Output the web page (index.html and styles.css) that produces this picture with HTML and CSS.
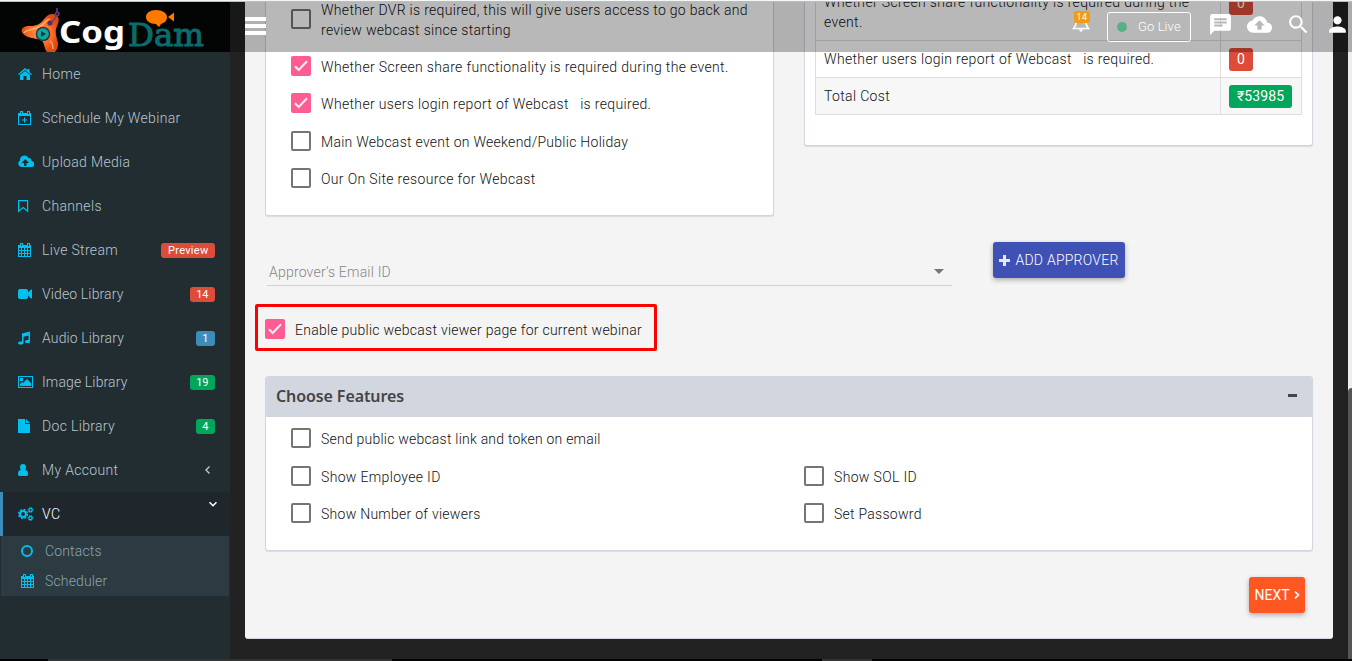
FILE: index.html
```html
<!DOCTYPE html>
<html lang="en">
<head>
<meta charset="utf-8">
<title>CogDam</title>
<link rel="stylesheet" href="styles.css">
</head>
<body>
<svg class="defs" width="0" height="0">
  <symbol id="cal" viewBox="0 0 14 14"><path fill-rule="evenodd" d="M0 2h2V0h3v2h4V0h3v2h1v12H0zM1 5v2h2V5zm3 0v2h2V5zm3 0v2h2V5zm3 0v2h2V5zM1 8v2h2V8zm3 0v2h2V8zm3 0v2h2V8zm3 0v2h2V8zM1 11v2h2v-2zm3 0v2h2v-2zm3 0v2h2v-2zm3 0v2h2v-2zM3 1v2h1V1zm7 0v2h1V1z"/></symbol>
  <symbol id="check" viewBox="0 0 20 20"><path d="M4 10.200l3.700 3.800L16 5.300" fill="none" stroke="#fff" stroke-opacity=".9" stroke-width="2"/></symbol>
</svg>
<div class="topline"></div>
<div class="app">
  <aside class="sidebar">
    <div class="logo">
      <svg width="230" height="50" viewBox="0 2 230 50">
        <defs><radialGradient id="org"><stop offset="0" stop-color="#ff9a58"/><stop offset=".65" stop-color="#ff6b25"/><stop offset="1" stop-color="#e04a10"/></radialGradient></defs>
        <path d="M37 25c5-2 6-5 9-8 3-4 10-4 12 0 2 5-1 8-2 12-1 5 1 9 2 14 0 4-1 7-3 9h-8c-3-3-2-8-5-11-4-3-9-2-14-4-9-4-8-10 0-11 3 0 6 0 9-1z" fill="url(#org)"/>
        <path d="M24 33c1-3 8-3 15-6 5-2 6-7 11-8M50 41c3 2 3 5 3 8" stroke="#ffc08c" stroke-width="1.500" fill="none" opacity=".75"/>
        <circle cx="43" cy="34" r="7.300" fill="#243b42"/><circle cx="43" cy="34" r="5.800" fill="#15a6a1"/><path d="M41 31v6l5-3z" fill="#17363b"/>
        <path d="M51 23c2-3 4-4 6-8M57 8v4M55 15c1-4 4-3 4-1s-4 2-4 1" fill="none" stroke="#654078" stroke-width="1.600"/><circle cx="50" cy="23" r="2.600" fill="#58315e"/>
        <text class="cog" x="59" y="43" textLength="66" lengthAdjust="spacingAndGlyphs">Cog</text>
        <text class="dam" x="128" y="45.500" textLength="76" lengthAdjust="spacingAndGlyphs">Dam</text>
        <path d="M146 17c0-4 4-7 10-7s11 3 11 7-3 6-6 7l-2 3-3-3c-6 0-10-3-10-7zM168 17l6-4.500v9z" fill="#ff7800"/>
      </svg>
    </div>
    <nav class="menu">
      <a class="item"><svg class="ico" viewBox="0 0 14 14"><path d="M7 1l2.500 2.200V2h2v3L14 7.300l-.8.800L7 3 .8 8.100 0 7.300zM2 8l5-4 5 4v5H8.500V9h-3v4H2z"/></svg><span>Home</span></a>
      <a class="item"><svg class="ico" viewBox="0 0 14 14"><path fill-rule="evenodd" d="M0 2h2V0h3v2h4V0h3v2h1v12H0zM1 5v8h11V5zM6 6.500h1V8.500h2v1H7v2H6v-2H4v-1h2zM3 1v2h1V1zm7 0v2h1V1z"/></svg><span>Schedule My Webinar</span></a>
      <a class="item"><svg class="ico wide" viewBox="0 0 16 14"><path fill-rule="evenodd" d="M3.500 12A3.500 3.500 0 0 1 2 5.500 4.500 4.500 0 0 1 10.500 3c2 0 3 1 3 3A3 3 0 0 1 13 12zM6 11h2.500V8H11L7.300 4 3.500 8H6z"/></svg><span>Upload Media</span></a>
      <a class="item"><svg class="ico" viewBox="0 0 14 14"><path d="M.6 1.600h9v10.600L5.100 8.600.6 12.200z" fill="none" stroke="#00c0ef" stroke-width="1.200"/></svg><span>Channels</span></a>
      <a class="item"><svg class="ico"><use href="#cal"/></svg><span>Live Stream</span><b class="badge red preview">Preview</b></a>
      <a class="item tight"><svg class="ico" viewBox="0 0 14 14"><path d="M2 2h6c1.200 0 2 .8 2 2v1.500L13 2.500h1v9h-1l-3-3V10c0 1.200-.8 2-2 2H2c-1.200 0-2-.8-2-2V4c0-1.200.8-2 2-2z"/></svg><span>Video Library</span><b class="badge red">14</b></a>
      <a class="item tight"><svg class="ico" viewBox="0 0 14 14"><path d="M4 2.500L12 .5v10c0 1-1 1.500-2.500 1.500S7 11.500 7 10.500 8 9 10.500 9V4.500l-5 1.300V12c0 1-1.300 1.500-2.800 1.500S0 13 0 12s1.500-1.700 4-1.500z"/></svg><span>Audio Library</span><b class="badge blue">1</b></a>
      <a class="item tight"><svg class="ico wide" viewBox="0 0 16 14"><path fill-rule="evenodd" d="M0 1h15v12H0zM1 2v10h13V2zM2 3h3v3H2zm0 8V9l2-2 1 1 4-4 4 4v3z"/></svg><span>Image Library</span><b class="badge green">19</b></a>
      <a class="item"><svg class="ico" viewBox="0 0 14 14"><path d="M0 0h7v5h5v9H0zM8 0l4 4H8z"/></svg><span>Doc Library</span><b class="badge green">4</b></a>
      <a class="item"><svg class="ico" viewBox="0 0 14 14"><path d="M5 1c2 0 3 1.200 3 3.200C8 5.500 7.600 6.300 7 7c2 0 3 1.500 3 4 0 1.300-.5 2-1.500 2h-7C.5 13 0 12.300 0 11c0-2.500 1-4 3-4-.6-.7-1-1.500-1-2.800C2 2.200 3 1 5 1z"/></svg><span>My Account</span><svg class="arrow" viewBox="0 0 8 8"><path d="M5.500 .5L2 4l3.500 3.500" /></svg></a>
      <a class="item active"><svg class="ico wide" viewBox="0 0 16 14"><g fill="none" stroke="#00c0ef"><circle cx="5" cy="7" r="3" stroke-width="2"/><circle cx="5" cy="7" r="4.500" stroke-width="1.400" stroke-dasharray="1.800 1.740"/><circle cx="12.500" cy="3" r="1.600" stroke-width="1.300"/><circle cx="12.500" cy="3" r="2.500" stroke-dasharray="1 .96"/><circle cx="12.500" cy="11" r="1.600" stroke-width="1.300"/><circle cx="12.500" cy="11" r="2.500" stroke-dasharray="1 .96"/></g></svg><span>VC</span><svg class="arrow down" viewBox="0 0 8 8"><path d="M.5 2.200L4 5.700l3.500-3.500"/></svg></a>
    </nav>
    <div class="submenu">
      <a><svg class="ico" viewBox="0 0 14 14"><circle cx="6" cy="7" r="5" fill="none" stroke="#00c0ef" stroke-width="2"/></svg><span>Contacts</span></a>
      <a><svg class="ico"><use href="#cal"/></svg><span>Scheduler</span></a>
    </div>
  </aside>

  <main class="main">
    <section class="panel">
      <div class="cards">
        <div class="card options">
          <label class="opt tall"><i class="box"></i><span>Whether DVR is required, this will give users access to go back and<br>review webcast since starting</span></label>
          <label class="opt"><i class="box on"><svg><use href="#check"/></svg></i><span>Whether Screen share functionality is required during the event.</span></label>
          <label class="opt"><i class="box on"><svg><use href="#check"/></svg></i><span>Whether users login report of Webcast &nbsp; is required.</span></label>
          <label class="opt snug"><i class="box"></i><span>Main Webcast event on Weekend/Public Holiday</span></label>
          <label class="opt"><i class="box"></i><span>Our On Site resource for Webcast</span></label>
        </div>
        <div class="card costs">
          <table>
            <tr class="first"><td>Whether Screen share functionality is required during the event.</td><td class="amt"><b class="price red">0</b></td></tr>
            <tr><td>Whether users login report of Webcast &nbsp; is required.</td><td class="amt"><b class="price red">0</b></td></tr>
            <tr class="total"><td>Total Cost</td><td class="amt"><b class="price green">₹53985</b></td></tr>
          </table>
        </div>
      </div>

      <div class="approver">
        <div class="select"><span>Approver's Email ID</span><i class="caret"></i></div>
        <button class="btn add"><svg width="11" height="11" viewBox="0 0 11 11"><path d="M4 0h3v4h4v3H7v4H4V7H0V4h4z" fill="#e6e8f6"/></svg><span>ADD APPROVER</span></button>
      </div>

      <label class="public"><i class="box on"><svg><use href="#check"/></svg></i><span>Enable public webcast viewer page for current webinar</span></label>

      <div class="card features">
        <header><h2>Choose Features</h2><i class="minus"></i></header>
        <div class="grid">
          <label class="opt full"><i class="box"></i><span>Send public webcast link and token on email</span></label>
          <label class="opt"><i class="box"></i><span>Show Employee ID</span></label>
          <label class="opt"><i class="box"></i><span>Show SOL ID</span></label>
          <label class="opt snug"><i class="box"></i><span>Show Number of viewers</span></label>
          <label class="opt snug"><i class="box"></i><span>Set Passowrd</span></label>
        </div>
      </div>
      <div class="actions"><button class="btn next"><span>NEXT</span><svg width="6" height="8" viewBox="0 0 6 8"><path d="M1 .7L4.500 4 1 7.300" fill="none" stroke="#fff" stroke-width="1.600"/></svg></button></div>
    </section>
  </main>
  <div class="scrollbar"><div class="thumb"></div></div>

  <div class="navbar">
    <div class="burger"><i></i><i></i><i></i></div>
    <div class="tools">
      <div class="bell"><svg width="18" height="20" viewBox="0 0 18 20"><path d="M1.500 15.500C4 13 4 11 4.500 8 5 5 6.500 4 9 4s4 1 4.500 4c.5 3 .5 5 3 7.500z" fill="none" stroke="#fff" stroke-width="1.500"/><path d="M6.500 16.500h5L9 19z" fill="#fff"/></svg><b>14</b></div>
      <div class="golive"><i></i><span>Go Live</span></div>
      <svg class="chat" width="25" height="25" viewBox="0 0 24 24"><path fill="#fff" d="M20 2H4c-1.100 0-1.990.9-1.990 2L2 22l4-4h14c1.100 0 2-.9 2-2V4c0-1.100-.9-2-2-2zM6 9h12v2H6V9zm8 5H6v-2h8v2zm4-6H6V6h12v2z"/></svg>
      <svg class="cloud" width="25" height="25" viewBox="0 0 24 24"><path fill="#fff" d="M19.350 10.040C18.670 6.590 15.640 4 12 4 9.110 4 6.600 5.640 5.350 8.040 2.340 8.360 0 10.910 0 14c0 3.310 2.690 6 6 6h13c2.760 0 5-2.240 5-5 0-2.640-2.050-4.780-4.650-4.960zM14 13v4h-4v-4H7l5-5 5 5h-3z"/></svg>
      <svg class="search" width="25" height="25" viewBox="0 0 24 24"><path fill="#fff" d="M15.500 14h-.79l-.28-.27C15.410 12.590 16 11.110 16 9.500 16 5.910 13.090 3 9.500 3S3 5.910 3 9.500 5.910 16 9.500 16c1.610 0 3.090-.59 4.230-1.570l.27.280v.79l5 4.990L20.490 19l-4.990-5zm-6 0C7.010 14 5 11.990 5 9.500S7.010 5 9.500 5 14 7.010 14 9.500 11.990 14 9.500 14z"/></svg>
      <svg class="person" width="25" height="25" viewBox="0 0 24 24"><path fill="#fff" d="M12 12c2.210 0 4-1.790 4-4s-1.790-4-4-4-4 1.790-4 4 1.790 4 4 4zm0 2c-2.670 0-8 1.340-8 4v2h16v-2c0-2.660-5.330-4-8-4z"/></svg>
    </div>
  </div>
</div>
<div class="taskbar"><i></i><i></i></div>
</body>
</html>
```

FILE: styles.css
```css
* { box-sizing: border-box; }
body { margin: 0; width: 1352px; height: 661px; overflow: hidden; display: flex; flex-direction: column; background: #222; color: #111; font: 300 14px/20px Roboto, "Liberation Sans", sans-serif; letter-spacing: .34px; }
i { display: block; font-style: normal; }
b { font-weight: 400; }
.defs { position: absolute; }
.topline { height: 2px; flex: none; background: #f4f5f5; border-bottom: 1px solid #b7c0bf; }
.app { position: relative; flex: 1; min-height: 0; display: flex; }
.red { background: #dd4b39; }
.blue { background: #3c8dbc; }
.green { background: #00a65a; }

.sidebar { width: 230px; background: #222d32; color: #b8c7ce; letter-spacing: .33px; }
.logo { height: 50px; background: #030504; }
.logo svg { display: block; }
.cog { font: bold 31px "Noto Sans", sans-serif; fill: #fff; letter-spacing: 0; }
.dam { font: 31px "DejaVu Serif", serif; fill: #0b6c6c; stroke: #0b6c6c; stroke-width: 1px; letter-spacing: 0; }
.item { display: flex; align-items: center; height: 44px; padding: 0 15px 0 18px; }
.tight { letter-spacing: .13px; }
.ico { width: 14px; height: 14px; margin-right: 10px; fill: #00c0ef; flex: none; }
.ico.wide { width: 16px; margin-right: 8px; }
.badge { margin-left: auto; height: 15px; padding: 0 6.500px; border-radius: 3px; color: #fff; font-size: 11px; line-height: 15px; letter-spacing: 0; }
.preview { letter-spacing: .3px; }
.arrow { width: 8px; height: 8px; margin: 0 3px 0 auto; fill: none; stroke: #b8c7ce; stroke-width: 1.400; }
.item.active { padding-left: 15px; border-left: 3px solid #3c8dbc; background: #1f272d; color: #fff; }
.arrow.down { margin: 0 -2px 20px auto; stroke: #fff; stroke-width: 1.600; }
.submenu { margin: 0 1px; background: #2c3b41; color: #8aa4af; letter-spacing: .15px; }
.submenu a { display: flex; align-items: center; height: 30px; padding-left: 20px; }

.main { width: 1118px; padding-left: 15px; background: #222; }
.panel { width: 1088px; height: 637px; padding: 0 20px; background: #f4f4f4; border-bottom: 1px solid #d2d6de; border-radius: 0 0 3px 3px; overflow: hidden; }
.cards { display: flex; justify-content: space-between; align-items: flex-start; height: 214px; }
.card { background: #fff; border: 1px solid #d2d6de; border-radius: 3px; box-shadow: 0 1px 1px rgba(0,0,0,.1); }
.cards .card { width: 509px; border-top: 0; border-radius: 0 0 3px 3px; }
.options { height: 214px; padding-left: 25px; overflow: hidden; }
.opt { display: flex; align-items: center; height: 37.500px; gap: 10px; }
.opt.tall { height: 40px; margin: -3px 0 8px; letter-spacing: .3px; }
.opt.snug { letter-spacing: .27px; }
.opt span, .public span { position: relative; top: 1px; }
.box { width: 20px; height: 20px; flex: none; border: 2px solid #757575; border-radius: 2px; background: #fff; }
.box.on { border: 0; background: #ff5c93; }
.box svg { display: block; width: 20px; height: 20px; }

.costs { height: 144px; padding: 0 10px; overflow: hidden; }
table { width: 487px; border-collapse: collapse; table-layout: fixed; margin-top: -19px; }
td { height: 37px; padding: 0 8px; border: 1px solid #ddd; vertical-align: middle; }
.first td { height: 57px; vertical-align: top; padding-top: 8px; }
.amt { width: 81px; }
.total { background: #f7f7f7; }
.price { display: block; width: max-content; height: 23px; padding: 0 8px; border-radius: 3px; color: #fff; line-height: 23px; letter-spacing: .1px; }

.approver { display: flex; height: 62px; padding-top: 26px; }
.select { display: flex; align-items: center; justify-content: space-between; width: 685px; height: 30px; margin: 14px 41px 0 2px; padding: 2px 8px 0 2px; border-bottom: 1px solid #d2d2d2; color: #858585; letter-spacing: .2px; }
.caret { border: 5px solid transparent; border-top-color: #757575; border-bottom: 0; }
.btn { display: flex; align-items: center; justify-content: center; height: 36px; padding: 0; border: 0; border-radius: 3px; box-shadow: 0 2px 5px rgba(0,0,0,.3); color: #fff; font: 300 14px/20px Roboto, sans-serif; letter-spacing: .25px; }
.add { width: 132px; gap: 5px; background: #3f51b5; }
.public { display: flex; align-items: center; gap: 10px; width: 402px; height: 47px; margin: 26px 0 25px -10px; padding: 2px 0 0 7px; border: 3px solid #f00; border-radius: 2px; letter-spacing: .26px; }
.features { height: 175px; }
.features header { display: flex; align-items: center; justify-content: space-between; height: 40px; padding: 0 15px 2px 10px; background: #d2d6de; }
h2 { margin: 0; color: #444; font: 600 16px/20px "Noto Sans", sans-serif; letter-spacing: -.1px; }
.minus { width: 9px; height: 3px; margin-top: -2px; background: #444; }
.grid { display: grid; grid-template-columns: 513px 1fr; grid-auto-rows: 37.500px; padding: 2.500px 0 0 25px; }
.full { grid-column: 1 / -1; letter-spacing: .22px; }
.actions { display: flex; justify-content: flex-end; padding: 26px 8px 0; }
.next { width: 56px; gap: 4px; background: #ff5722; font-weight: 400; letter-spacing: 0; }
.scrollbar { width: 4px; padding-top: 386px; background: #eee; }
.thumb { height: 271px; background: #555; border-radius: 4px 0 0 0; }

/* Translucent bar over the scrolled page */
.navbar { position: absolute; left: 230px; right: 0; top: 0; height: 50px; display: flex; align-items: flex-start; justify-content: space-between; padding-left: 15px; background: rgba(0,0,0,.28); color: #fff; overflow: hidden; }
.burger { display: flex; flex-direction: column; gap: 3px; padding-top: 15px; }
.burger i { width: 21px; height: 4px; background: #fff; }
.tools { display: flex; align-items: flex-start; flex: none; margin-right: 2px; }
.tools > svg { margin-top: 10px; }
.bell { position: relative; width: 18px; height: 20px; margin: 11px 17px 0 0; }
.bell b { position: absolute; left: 2px; top: -2px; width: 16px; height: 12px; border-radius: 2px; background: #f39c12; font-size: 9px; line-height: 12px; text-align: center; }
.golive { display: flex; align-items: center; gap: 11px; width: 84px; height: 30px; margin: 10px 17px 0 0; padding-left: 9px; border: 1px solid #fff; border-radius: 3px; font-size: 13px; letter-spacing: .1px; }
.golive i { width: 10px; height: 10px; border-radius: 50%; background: #56b184; }
.cloud { margin-left: 14px; }
.search { margin-left: 14px; }
.person { margin-left: 14px; }

.taskbar { display: flex; height: 2px; flex: none; padding-left: 48px; gap: 430px; background: #000; }
.taskbar i { width: 344px; background: #333; }
.taskbar i + i { width: 50px; }
```
